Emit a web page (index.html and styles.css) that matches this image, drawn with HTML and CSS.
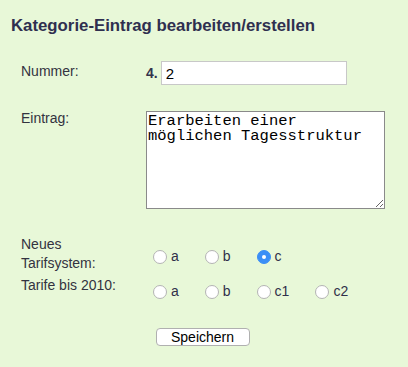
FILE: index.html
```html
<!DOCTYPE html>
<html lang="de">
<head>
  <meta charset="UTF-8">
  <meta name="viewport" content="width=device-width, initial-scale=1.0">
  <title>Kategorie-Eintrag</title>
  <link rel="stylesheet" href="styles.css">
</head>
<body>
  <div class="container">
    <h3>Kategorie-Eintrag bearbeiten/erstellen</h3>
    <form id="entryForm" class="form">
      <label class="lbl lbl-num" for="nummer">Nummer:</label>
      <div class="field field-num">
        <b class="prefix">4.</b>
        <input type="text" id="nummer" name="nummer" value="2">
      </div>

      <label class="lbl lbl-text" for="eintrag">Eintrag:</label>
      <div class="field field-text">
        <textarea id="eintrag" name="eintrag">Erarbeiten einer möglichen Tagesstruktur</textarea>
      </div>

      <div class="lbl lbl-radio">Neues<br>Tarifsystem:</div>
      <div class="field field-radio">
        <label class="opt"><input type="radio" name="neu" value="a"><span>a</span></label>
        <label class="opt"><input type="radio" name="neu" value="b"><span>b</span></label>
        <label class="opt"><input type="radio" name="neu" value="c" checked><span>c</span></label>
      </div>

      <div class="lbl lbl-old">Tarife bis 2010:</div>
      <div class="field field-old">
        <label class="opt"><input type="radio" name="alt" value="a"><span>a</span></label>
        <label class="opt"><input type="radio" name="alt" value="b"><span>b</span></label>
        <label class="opt"><input type="radio" name="alt" value="c1"><span>c1</span></label>
        <label class="opt"><input type="radio" name="alt" value="c2"><span>c2</span></label>
      </div>

      <div class="actions">
        <button type="submit">Speichern</button>
      </div>
    </form>
  </div>
</body>
</html>
```

FILE: styles.css
```css
body { margin: 0; background: #e8f8d8; font-family: "Liberation Sans", Arial, sans-serif; color: #30304a; }
.container { padding: 16px 12px 20px 11px; }
h3 { margin: 0; font-size: 16.8px; line-height: 19px; font-weight: bold; color: #2f2f4f; }

.form { display: grid; grid-template-columns: 125px 1fr; padding-left: 10px; margin-top: 27px; font-size: 14px; }
.lbl { line-height: 19px; color: #333340; }
.field { display: flex; align-items: center; }

.field-num { margin-top: -1px; }
.prefix { font-size: 14px; color: #33334d; margin-right: 3px; }
.field-num input { width: 186px; height: 24px; box-sizing: border-box; border: 1px solid #c8c8c8; background: #fff; padding: 1px 4px 0; font-family: "Liberation Sans", Arial, sans-serif; font-size: 15px; color: #000; outline: none; }

.lbl-text { margin-top: 24px; }
.field-text { margin-top: 26px; }
.field-text textarea { width: 239px; height: 98px; box-sizing: border-box; border: 1px solid #8a8a8a; background: #fff; padding: 2px 1px; margin: 0; font-family: "Liberation Mono", "Courier New", monospace; font-size: 15.5px; line-height: 15px; color: #000; resize: vertical; outline: none; }

.lbl-radio { margin-top: 26px; }
.field-radio { margin-top: 26px; padding-top: 5px; }
.lbl-old { margin-top: 3px; }
.field-old { margin-top: 3px; align-items: flex-start; padding-top: 7px; }

.opt { display: flex; align-items: center; margin-right: 19px; line-height: 17px; color: #30304a; }
.opt span { margin-left: 4px; }
.opt input { appearance: none; -webkit-appearance: none; width: 14px; height: 14px; margin: 0 0 0 7px; border: 1px solid #b4b4b4; border-radius: 50%; background: #fff; box-sizing: border-box; position: relative; }
.opt input:checked { background: #3b8ff6; border-color: #3b8ff6; }
.opt input:checked::after { content: ""; position: absolute; left: 4px; top: 4px; width: 4px; height: 4px; border-radius: 50%; background: #fff; }

.actions { grid-column: 1 / -1; text-align: center; margin-top: 28px; padding-right: 12px; }
button { width: 94px; height: 18px; padding: 0; background: #fff; border: 1px solid #b0b0b0; border-radius: 4px; font-family: "Liberation Sans", Arial, sans-serif; font-size: 14px; color: #000; line-height: 16px; }
```
